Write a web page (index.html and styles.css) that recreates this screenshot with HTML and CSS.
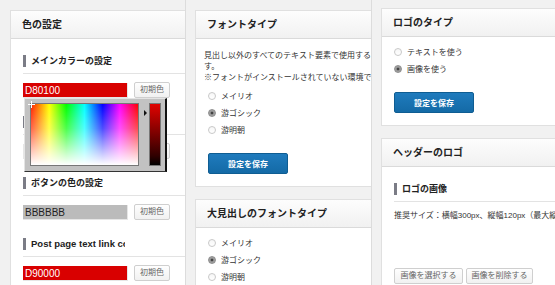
FILE: index.html
```html
<!DOCTYPE html>
<html lang="ja">
<head>
<meta charset="utf-8">
<title>設定</title>
<link rel="stylesheet" href="styles.css">
</head>
<body>
<div class="cols">
  <div class="col col1">
    <section class="card card-wide">
      <h3 class="card-head">色の設定</h3>
      <div class="card-body">
        <div class="field">
          <h4 class="sub"><span>メインカラーの設定</span></h4>
          <div class="color-row">
            <div class="color-input c-red">D80100</div>
            <button class="btn-sm">初期色</button>
          </div>
          <div class="picker">
            <div class="pick-area"><span class="cross"></span></div>
            <span class="pick-arrow"></span>
            <div class="pick-slider"></div>
          </div>
        </div>
        <div class="field">
          <h4 class="sub"><span>背景色の設定</span></h4>
          <div class="color-row">
            <div class="color-input c-white">FFFFFF</div>
            <button class="btn-sm">初期色</button>
          </div>
        </div>
        <div class="field">
          <h4 class="sub"><span>ボタンの色の設定</span></h4>
          <div class="color-row">
            <div class="color-input c-grey">BBBBBB</div>
            <button class="btn-sm">初期色</button>
          </div>
        </div>
        <div class="field">
          <h4 class="sub"><span class="latin">Post page text link color</span></h4>
          <div class="color-row">
            <div class="color-input c-red2">D90000</div>
            <button class="btn-sm">初期色</button>
          </div>
        </div>
      </div>
    </section>
  </div>

  <div class="col col2">
    <section class="card card-mid">
      <h3 class="card-head">フォントタイプ</h3>
      <div class="card-body body-radio">
        <p class="desc shift">見出し以外のすべてのテキスト要素で使用するフォントです。</p>
        <p class="desc shift nowrap">※フォントがインストールされていない環境では代替フォントが使用されます。</p>
        <ul class="radios">
          <li><span class="radio"></span>メイリオ</li>
          <li><span class="radio on"></span>游ゴシック</li>
          <li><span class="radio"></span>游明朝</li>
        </ul>
        <button class="btn-blue">設定を保存</button>
      </div>
    </section>
    <section class="card card-mid">
      <h3 class="card-head">大見出しのフォントタイプ</h3>
      <div class="card-body body-radio">
        <ul class="radios">
          <li><span class="radio"></span>メイリオ</li>
          <li><span class="radio on"></span>游ゴシック</li>
          <li><span class="radio"></span>游明朝</li>
        </ul>
      </div>
    </section>
  </div>

  <div class="col col3">
    <section class="card card-wide">
      <h3 class="card-head">ロゴのタイプ</h3>
      <div class="card-body body-radio">
        <ul class="radios">
          <li><span class="radio"></span>テキストを使う</li>
          <li><span class="radio on"></span>画像を使う</li>
        </ul>
        <button class="btn-blue">設定を保存</button>
      </div>
    </section>
    <section class="card card-wide">
      <h3 class="card-head">ヘッダーのロゴ</h3>
      <div class="card-body">
        <h4 class="sub"><span>ロゴの画像</span></h4>
        <p class="desc nowrap size-note">推奨サイズ：横幅300px、縦幅120px（最大縦幅200px）</p>
        <div class="img-btns">
          <button class="btn-sm btn-img">画像を選択する</button>
          <button class="btn-sm btn-img">画像を削除する</button>
        </div>
      </div>
    </section>
  </div>
</div>
</body>
</html>
```

FILE: styles.css
```css
html, body {
  margin: 0;
  padding: 0;
}
body {
  background: #f1f1f1;
  font-family: "Liberation Sans", "Noto Sans CJK JP", sans-serif;
  color: #333;
  width: 555px;
  height: 285px;
  overflow: hidden;
}
.cols {
  display: flex;
  height: 285px;
}
.col {
  flex: none;
  box-sizing: border-box;
  overflow: hidden;
  height: 285px;
  border-right: 1px solid #dcdcdc;
}
.col1 {
  width: 186px;
  padding: 10px 0 0 10px;
}
.col2 {
  width: 186px;
  padding: 10px 0 0 9px;
}
.col3 {
  flex: 1;
  border-right: 0;
  padding: 8px 0 0 9px;
}

.card {
  background: #fff;
  border: 1px solid #e0e0e0;
  box-sizing: border-box;
  margin-bottom: 12px;
}
.card-wide { width: 260px; }
.card-mid { width: 236px; }

.card-head {
  margin: 0;
  height: 27px;
  line-height: 27px;
  padding: 0 11px;
  font-size: 10px;
  font-weight: bold;
  color: #222;
  background: linear-gradient(#fdfdfd, #f1f1f1);
  border-bottom: 1px solid #dadada;
  white-space: nowrap;
}
.card-body {
  padding: 16px 12px 12px;
}
.body-radio {
  padding-top: 6px;
}

/* color fields */
.field {
  position: relative;
}
.field + .field {
  margin-top: 18px;
}
.sub {
  margin: 0;
  padding-bottom: 6px;
  border-bottom: 1px solid #e3e3e3;
  font-size: 9px;
  font-weight: bold;
  color: #222;
}
.sub span {
  display: block;
  width: 94px;
  height: 12px;
  line-height: 12px;
  padding-left: 5px;
  border-left: 3px solid #7b7c86;
  white-space: nowrap;
  overflow: hidden;
}
.sub .latin {
  font-size: 9.5px;
}
.color-row {
  display: flex;
  align-items: center;
  gap: 6px;
  margin-top: 8px;
}
.color-input {
  width: 105px;
  height: 15px;
  box-sizing: border-box;
  line-height: 15px;
  padding-left: 2px;
  font-size: 10px;
  border-right: 1px solid #e6e6e6;
  border-bottom: 1px solid #e6e6e6;
}
.c-red { background: #d80100; color: #fff; }
.c-red2 { background: #d90000; color: #fff; }
.c-grey { background: #bbbbbb; color: #222; }
.c-white { background: #fff; color: #222; border: 1px solid #e6e6e6; }

.btn-sm {
  height: 16px;
  box-sizing: border-box;
  padding: 0 5px;
  font-family: inherit;
  font-size: 8px;
  line-height: 14px;
  color: #666;
  background: linear-gradient(#fefefe, #f1f1f1);
  border: 1px solid #cfcfcf;
  border-radius: 2px;
}

/* color picker popup */
.picker {
  position: absolute;
  left: 1px;
  top: 43px;
  width: 143px;
  height: 74px;
  box-sizing: border-box;
  background: #c2c2c2;
  border-top: 1px solid #e4e4e4;
  border-left: 1px solid #e4e4e4;
  border-right: 2px solid #111;
  border-bottom: 1px solid #333;
  display: flex;
  align-items: flex-start;
  padding: 4px 0 0 5px;
  z-index: 2;
}
.pick-area {
  position: relative;
  width: 109px;
  height: 63px;
  border: 1px solid #777;
  box-sizing: border-box;
  background:
    linear-gradient(to bottom, rgba(255,255,255,0) 0%, rgba(255,255,255,0.3) 40%, #fff 100%),
    linear-gradient(to right, #ff2000 0%, #ffff00 17%, #00ff00 33%, #00ffff 50%, #0000ff 67%, #ff00ff 83%, #ff0000 100%);
}
.cross {
  position: absolute;
  left: -3px;
  top: -3px;
  width: 7px;
  height: 7px;
  background:
    linear-gradient(#fff, #fff) center / 7px 1px no-repeat,
    linear-gradient(#fff, #fff) center / 1px 7px no-repeat;
}
.pick-arrow {
  width: 0;
  height: 0;
  margin: 7px 2px 0 5px;
  border-top: 3px solid transparent;
  border-bottom: 3px solid transparent;
  border-left: 3px solid #111;
}
.pick-slider {
  width: 12px;
  height: 63px;
  box-sizing: border-box;
  border: 1px solid #777;
  background: linear-gradient(#e00200, #300000 85%, #000);
}

/* text & radios */
.desc {
  margin: 0;
  font-size: 8px;
  line-height: 11px;
  color: #333;
}
.shift {
  margin-left: -4px;
}
.body-radio .desc:first-child {
  margin-top: 5px;
}
.nowrap {
  white-space: nowrap;
}
.radios {
  list-style: none;
  margin: 4px 0 0;
  padding: 0;
}
.body-radio > .radios:first-child {
  margin-top: 0;
}
.radios li {
  display: flex;
  align-items: center;
  height: 17px;
  font-size: 8px;
  color: #333;
}
.radio {
  width: 8px;
  height: 8px;
  box-sizing: border-box;
  border: 1px solid #c9c9c9;
  border-radius: 50%;
  background: linear-gradient(#f6f6f6, #fff);
  margin-right: 5px;
  flex: none;
}
.radio.on {
  border-color: #8d8d8d;
  background: radial-gradient(circle, #444 0, #444 28%, #9a9a9a 40%, #a8a8a8 100%);
}
.btn-blue {
  display: block;
  margin-top: 15px;
  width: 80px;
  height: 21px;
  padding: 0;
  font-family: inherit;
  font-size: 8px;
  font-weight: bold;
  color: #fff;
  background: linear-gradient(#1f7bbd, #146aa6);
  border: 1px solid #0f5d92;
  border-radius: 2px;
}

/* logo image */
.size-note {
  margin-top: 8px;
}
.img-btns {
  display: flex;
  gap: 3px;
  margin-top: 47px;
}
.btn-img {
  width: 69px;
  padding: 0;
}
.btn-img + .btn-img {
  width: 67px;
}
```
